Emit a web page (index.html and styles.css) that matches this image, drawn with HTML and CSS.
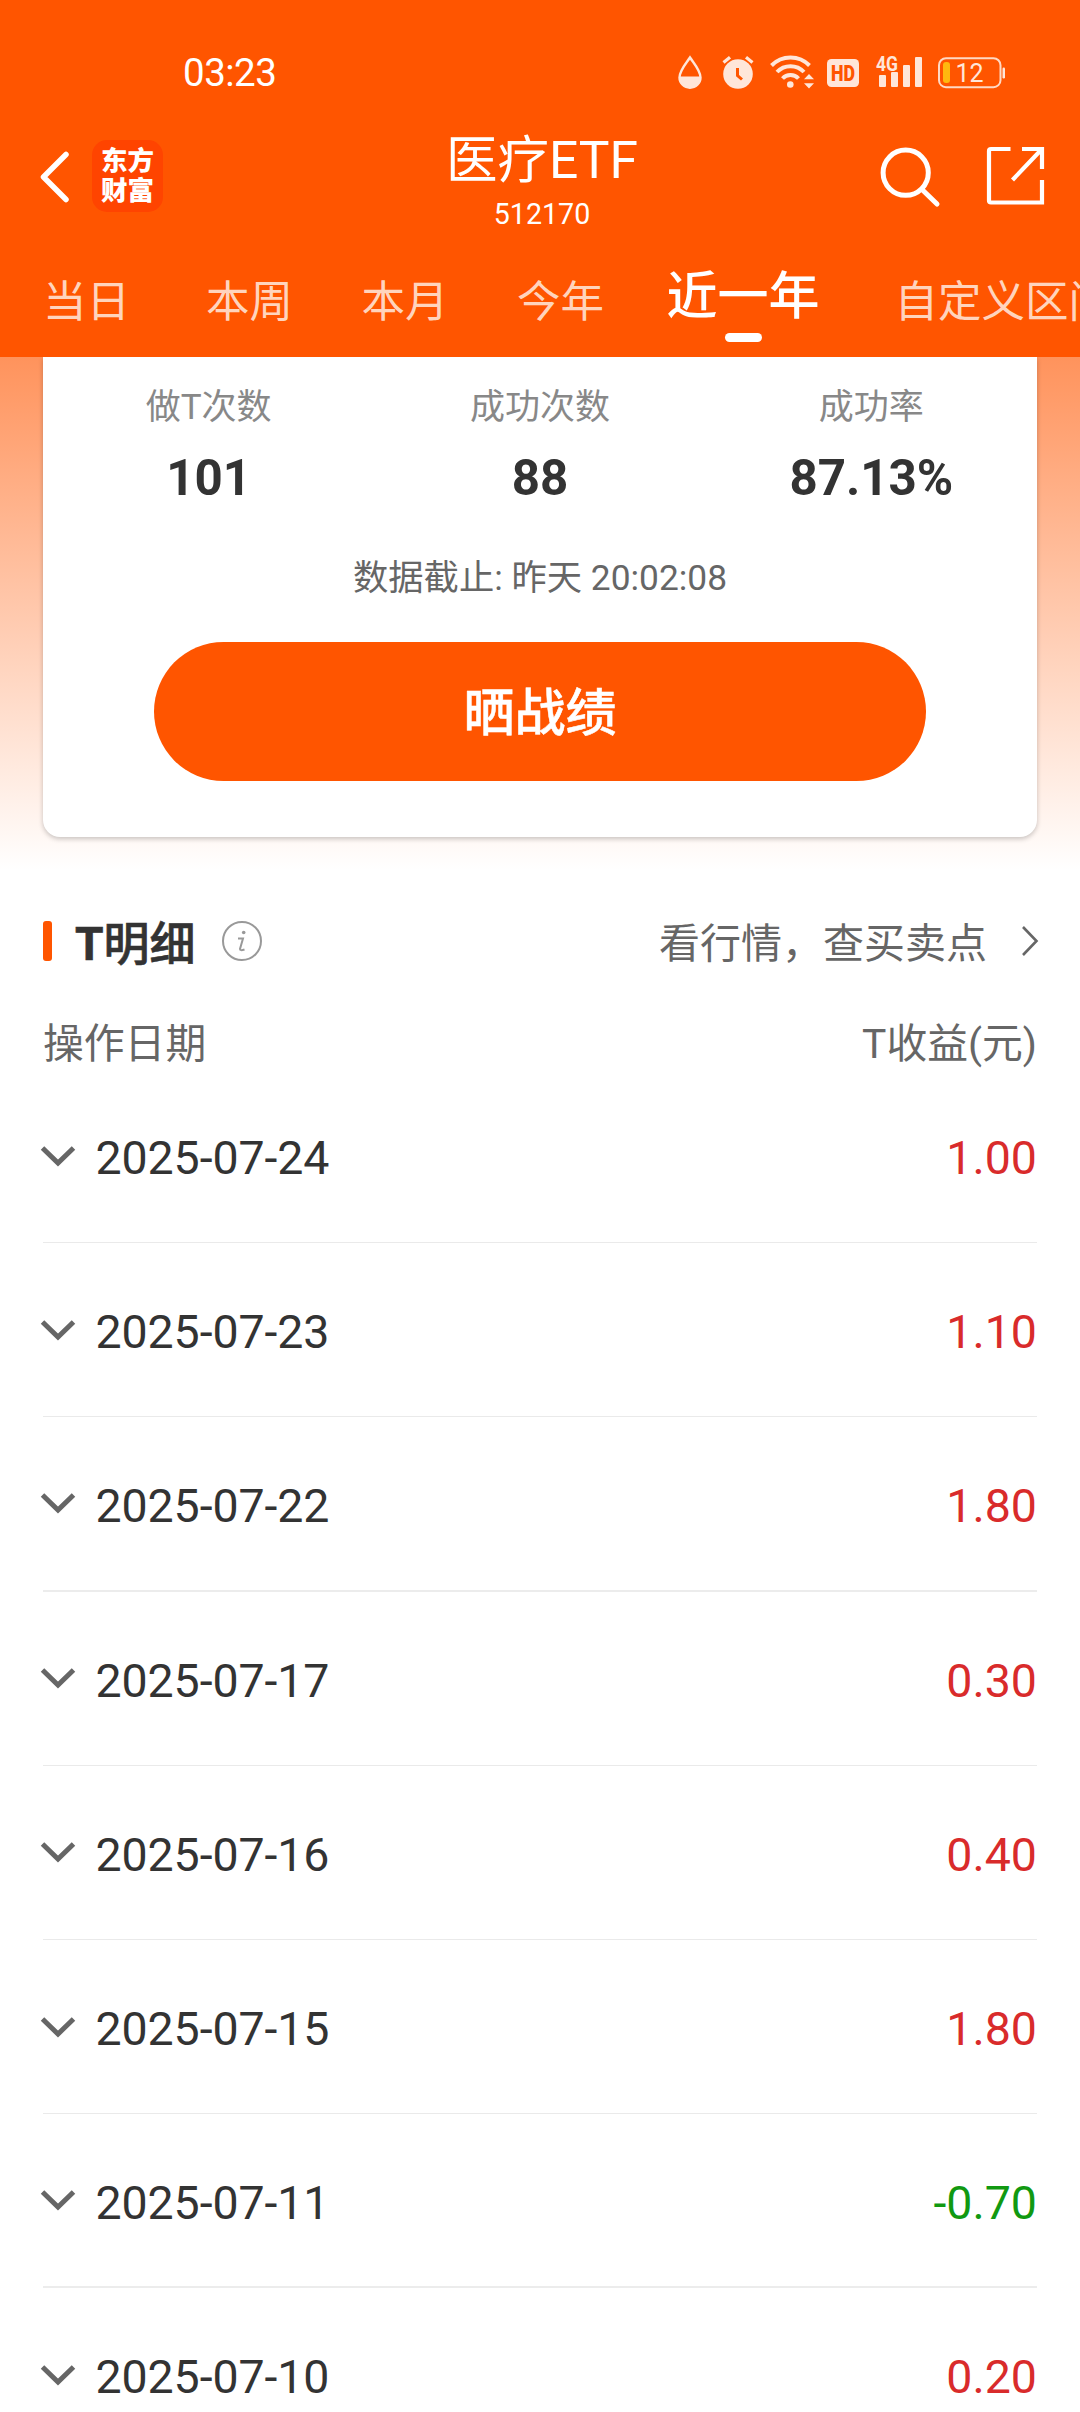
FILE: index.html
```html
<!DOCTYPE html>
<html lang="zh-CN">
<head>
<meta charset="utf-8">
<title>医疗ETF 512170</title>
<link rel="stylesheet" href="styles.css">
</head>
<body>
<header class="header">
  <div class="status">
    <span class="clock">03:23</span>
    <svg class="status-icons" width="336" height="40" viewBox="674 52 336 40">
      <g fill="#ffe6d9">
        <path d="M690 57.5 C686 63.5 679.5 70.5 679.5 77.5 A10.5 10.2 0 0 0 700.5 77.5 C700.5 70.5 694 63.5 690 57.5Z" fill="none" stroke="#ffe6d9" stroke-width="2.4"/>
        <path d="M679 76.500 H701 A11 11 0 0 1 679 76.500Z"/>
        <circle cx="738" cy="74" r="14.8"/>
        <path d="M723.500 62.500 L730 57.200 M752.500 62.500 L746 57.200" stroke="#ffe6d9" stroke-width="3.2"/>
        <path d="M737.500 68 V75.500 L742 79.500" fill="none" stroke="#ff5500" stroke-width="3"/>
        <circle cx="790.3" cy="84.500" r="3.3"/>
        <g fill="none" stroke="#ffe6d9" stroke-width="4">
          <path d="M771.500 65.500 A26.500 26.500 0 0 1 809.500 65.500"/>
          <path d="M777 72 A18.500 18.500 0 0 1 804 72"/>
          <path d="M782.500 78.500 A11 11 0 0 1 798.500 78.500"/>
        </g>
        <path d="M804 79.300 L809 74 L814 79.300Z M804 83.300 L809 88.600 L814 83.300Z"/>
        <rect x="827" y="59" width="32" height="28" rx="4.500"/>
        <rect x="879" y="75" width="7" height="12" rx="1"/>
        <rect x="891" y="72" width="7" height="15" rx="1"/>
        <rect x="903" y="65" width="7" height="22" rx="1"/>
        <rect x="915" y="57" width="7" height="30" rx="1"/>
        <rect x="1002.500" y="67.500" width="2.500" height="11" rx="1.200"/>
      </g>
      <rect x="939" y="58.200" width="61.500" height="29" rx="7" fill="none" stroke="#ffd9c4" stroke-width="2"/>
      <rect x="943" y="62" width="7" height="21" rx="3" fill="#ffb90f"/>
      <text class="hd" x="843" y="80.500" text-anchor="middle" textLength="24" lengthAdjust="spacingAndGlyphs">HD</text>
      <text class="net" x="876" y="70.500" textLength="22" lengthAdjust="spacingAndGlyphs">4G</text>
      <text class="level" x="969.500" y="81.500" text-anchor="middle">12</text>
    </svg>
  </div>
  <div class="navbar">
    <div class="nav-side">
      <svg class="back" width="32" height="56" viewBox="0 0 32 56"><path d="M28 5.500 L5.500 28 L28 50.500" fill="none" stroke="#fff" stroke-width="5.500" stroke-linecap="round" stroke-linejoin="round"/></svg>
      <div class="brand"><span>东方</span><span>财富</span></div>
    </div>
    <div class="nav-title">
      <h1>医疗ETF</h1>
      <p>512170</p>
    </div>
    <div class="nav-side nav-actions">
      <svg width="62" height="62" viewBox="879 145 62 62" fill="none" stroke="#fff" stroke-width="5"><circle cx="905.700" cy="171.700" r="22.600"/><path d="M922 188.500 L937 203" stroke-linecap="round"/></svg>
      <svg width="60" height="60" viewBox="986 146 60 60" fill="none" stroke="#fff" stroke-width="4.200"><path d="M1010.500 149 H991 Q989 149 989 151 V200.500 Q989 202.500 991 202.500 H1042 V180"/><path d="M1022 149 H1042 V169 M1041 150 L1012.500 180"/></svg>
    </div>
  </div>
  <nav class="tabs">
    <a>当日</a><a>本周</a><a>本月</a><a>今年</a><a class="active">近一年</a><a>自定义区间</a>
  </nav>
</header>
<section class="summary">
  <div class="card">
    <dl class="stats">
      <div><dt>做T次数</dt><dd>101</dd></div>
      <div><dt>成功次数</dt><dd>88</dd></div>
      <div><dt>成功率</dt><dd>87.13%</dd></div>
    </dl>
    <p class="asof">数据截止: 昨天 20:02:08</p>
    <button class="share">晒战绩</button>
  </div>
</section>
<main class="details">
  <div class="section-head">
    <i class="mark"></i>
    <h2><span>T</span>明细</h2>
    <svg class="info" width="42" height="42" viewBox="0 0 42 42"><circle cx="21" cy="21" r="19" fill="none" stroke="#999" stroke-width="2"/><circle cx="22.700" cy="12.500" r="1.800" fill="#999"/><path d="M17 18.500 H22 L19 29 Q19 31 23.500 29.500" fill="none" stroke="#999" stroke-width="2"/></svg>
    <a class="more"><span>看行情，查买卖点</span><svg width="20" height="34" viewBox="0 0 20 34"><path d="M3 3 L16.500 17 L3 31" fill="none" stroke="#666" stroke-width="2.600"/></svg></a>
  </div>
  <div class="list-head"><span>操作日期</span><span>T收益(元)</span></div>
  <ul class="list">
    <li><svg class="chev" viewBox="0 0 36 24"><path d="M2.500 3 L18 18 L33.500 3"/></svg><time>2025-07-24</time><b>1.00</b></li>
    <li><svg class="chev" viewBox="0 0 36 24"><path d="M2.500 3 L18 18 L33.500 3"/></svg><time>2025-07-23</time><b>1.10</b></li>
    <li><svg class="chev" viewBox="0 0 36 24"><path d="M2.500 3 L18 18 L33.500 3"/></svg><time>2025-07-22</time><b>1.80</b></li>
    <li><svg class="chev" viewBox="0 0 36 24"><path d="M2.500 3 L18 18 L33.500 3"/></svg><time>2025-07-17</time><b>0.30</b></li>
    <li><svg class="chev" viewBox="0 0 36 24"><path d="M2.500 3 L18 18 L33.500 3"/></svg><time>2025-07-16</time><b>0.40</b></li>
    <li><svg class="chev" viewBox="0 0 36 24"><path d="M2.500 3 L18 18 L33.500 3"/></svg><time>2025-07-15</time><b>1.80</b></li>
    <li><svg class="chev" viewBox="0 0 36 24"><path d="M2.500 3 L18 18 L33.500 3"/></svg><time>2025-07-11</time><b class="down">-0.70</b></li>
    <li><svg class="chev" viewBox="0 0 36 24"><path d="M2.500 3 L18 18 L33.500 3"/></svg><time>2025-07-10</time><b>0.20</b></li>
  </ul>
</main>
</body>
</html>
```
FILE: styles.css
```css
* { box-sizing: border-box; margin: 0; padding: 0; }
body {
  width: 1080px;
  height: 2412px;
  overflow: hidden;
  background: #fff;
  color: #333;
  font-family: Roboto, "Noto Sans CJK SC", sans-serif;
}
svg { display: block; flex: none; }

.header { height: 357px; background: #ff5500; color: #fff; overflow: hidden; }

.status { display: flex; align-items: center; justify-content: space-between; height: 128px; padding: 16px 70px 0 183px; }
.clock { padding-top: 2px; font-size: 38.5px; font-weight: 450; line-height: 44px; letter-spacing: -0.5px; }
.status-icons text { font-family: Roboto, sans-serif; }
.hd { font-size: 22px; font-weight: 900; fill: #ff5500; }
.net { font-size: 21px; font-weight: 700; fill: #ffe6d9; }
.level { font-size: 25px; font-weight: 400; fill: #ffe6d9; }

.navbar { display: flex; justify-content: space-between; height: 112px; padding: 0 34px 0 38px; }
.nav-side { display: flex; width: 170px; padding-top: 12px; }
.back { margin: 9px 22px 0 0; }
.brand {
  display: flex; flex-direction: column; align-items: center; justify-content: center;
  width: 71px; height: 72px; border-radius: 15px; background: #ff4400;
  font-size: 26.5px; font-weight: 900; line-height: 30px;
}
.nav-title { text-align: center; padding-top: 3px; padding-right: 3px; }
.nav-title h1 { font-size: 51.5px; font-weight: 400; line-height: 60px; }
.nav-title p { font-size: 28.6px; line-height: 34px; margin-top: 6px; }
.nav-actions { justify-content: space-between; width: 167px; padding-top: 18px; }

.tabs { display: flex; align-items: flex-start; height: 117px; padding-left: 43px; white-space: nowrap; }
.tabs a { flex: none; margin-right: 68.5px; padding-top: 33px; font-size: 43.5px; line-height: 60px; color: #ffd4bd; }
.tabs a:first-child { margin-right: 76px; }
.tabs a:nth-child(4) { margin-right: 62.5px; }
.tabs .active { position: relative; margin-right: 75px; padding-top: 27px; font-size: 51px; font-weight: 500; color: #fff; }
.tabs .active::after {
  content: ""; position: absolute; left: 50%; top: 93px;
  width: 37px; height: 9px; margin-left: -18.5px; border-radius: 4.5px; background: #fff;
}

.summary { height: 513px; padding: 0 43px; background: linear-gradient(#ff935c, #fff); }
.card {
  display: flex; flex-direction: column; align-items: center;
  height: 480px; background: #fff; border-radius: 0 0 17px 17px;
  box-shadow: 0 2px 5px rgba(0, 0, 0, 0.22);
  clip-path: inset(0 -12px -12px -12px);
}
.stats { display: grid; grid-template-columns: repeat(3, 1fr); width: 100%; padding-top: 27px; text-align: center; }
.stats dt { font-size: 35px; line-height: 48px; color: #888; }
.stats dd { font-size: 49.3px; font-weight: 700; line-height: 60px; margin-top: 16px; }
.asof { margin-top: 46px; font-size: 35.3px; line-height: 48px; color: #666; }
.share {
  width: 772px; height: 139px; margin-top: 40px; padding-top: 5px; border: 0; border-radius: 70px;
  background: #ff5500; color: #fff; font: 500 51px/60px Roboto, "Noto Sans CJK SC", sans-serif;
  -webkit-text-stroke: 0.5px #fff;
}

.details { padding: 31px 43px 0; }
.section-head { display: flex; align-items: center; height: 80px; }
.mark { width: 9px; height: 40px; border-radius: 3px; background: #ff5500; }
.section-head h2 { margin-left: 23px; padding-top: 6px; font-size: 46px; font-weight: 500; line-height: 60px; -webkit-text-stroke: 0.6px #333; }
.section-head h2 span { font-weight: 700; }
.info { margin-left: 25px; }
.more { display: flex; align-items: center; gap: 33px; margin-left: auto; margin-right: -3px; font-size: 41px; line-height: 60px; color: #666; }
.more span { padding-top: 5px; }
.list-head { display: flex; justify-content: space-between; align-items: center; height: 60px; margin-top: 33px; font-size: 40.8px; line-height: 60px; color: #666; }
.list { list-style: none; margin-top: -5px; }
.list li { display: flex; align-items: center; height: 174.2px; border-bottom: 1px solid #eaeaea; font-size: 46.5px; line-height: 60px; }
.list li:nth-child(4n+3) { border-bottom: 2px solid #ececec; }
.chev { width: 36px; height: 24px; margin: 2px 0 0 -3px; fill: none; stroke: #666; stroke-width: 5; }
.list time { margin-left: 19.5px; padding-top: 5px; letter-spacing: -0.1px; }
.list b { margin-left: auto; padding-top: 5px; font-weight: 400; color: #d92b2b; }
.list .down { color: #119911; }
```
